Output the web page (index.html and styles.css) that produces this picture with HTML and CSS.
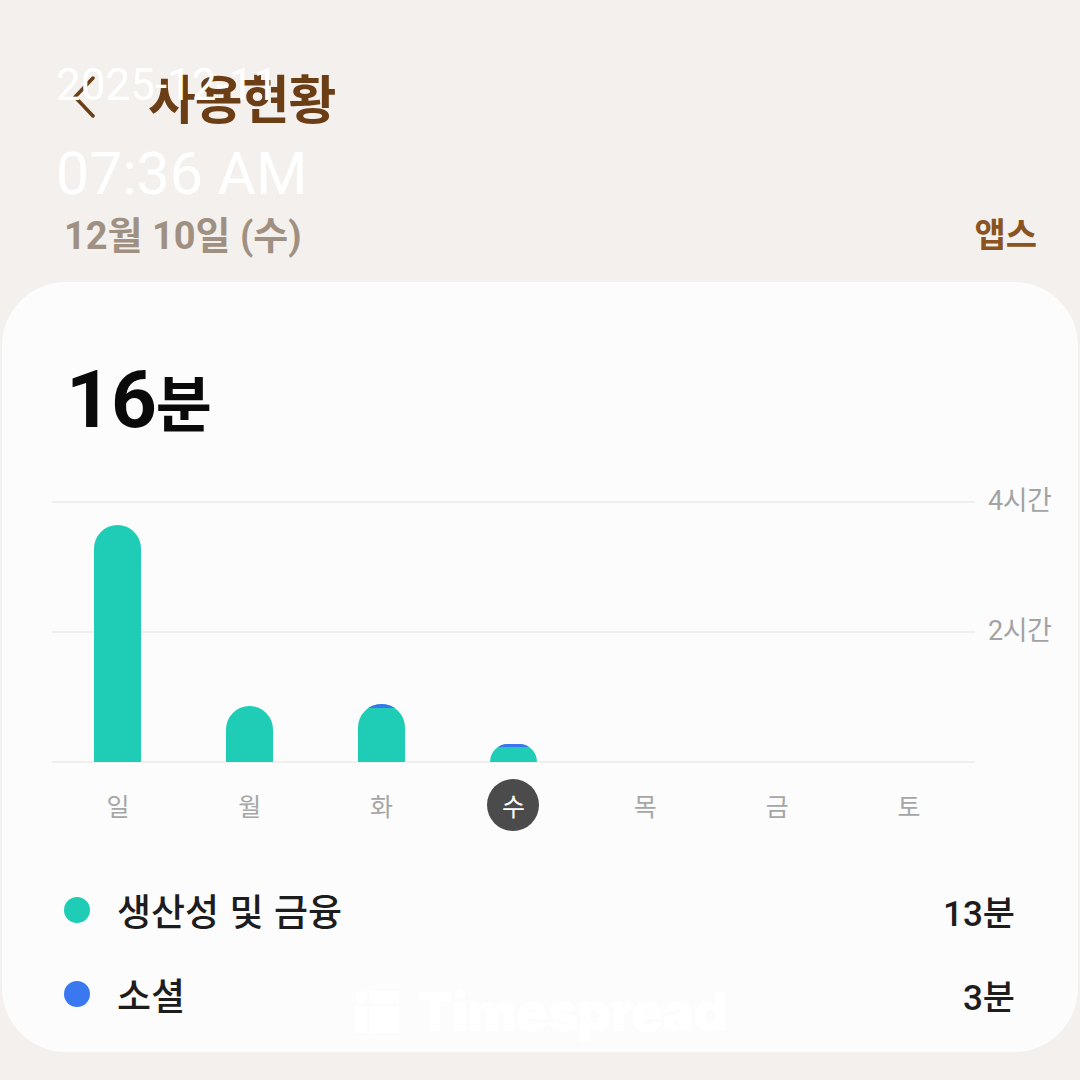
FILE: index.html
```html
<!DOCTYPE html>
<html lang="ko">
<head>
    <meta charset="UTF-8">
    <meta name="viewport" content="width=device-width, initial-scale=1.0">
    <title>사용현황</title>
    <link rel="stylesheet" href="styles.css">
</head>
<body>

<div class="stamp">
    <div class="stamp-date">2025-12-11</div>
    <div class="stamp-time">07:36 AM</div>
</div>

<header class="topbar">
    <svg class="back" width="24" height="42" viewBox="0 0 24 42">
        <path d="M21 2 L3 21 L21 40" fill="none" stroke="#6b3e16" stroke-width="3.5" stroke-linecap="round" stroke-linejoin="round"/>
    </svg>
    <h1>사용현황</h1>
</header>

<div class="subbar">
    <span class="date">12월 10일 (수)</span>
    <span class="apps">앱스</span>
</div>

<main class="card">
    <div class="total">16<span class="unit">분</span></div>

    <div class="chart">
        <div class="plot">
            <div class="bar-col"><div class="bar" style="height: 237px"></div></div>
            <div class="bar-col"><div class="bar" style="height: 56px"></div></div>
            <div class="bar-col"><div class="bar" style="height: 58px"><div class="seg-social" style="height: 4px"></div></div></div>
            <div class="bar-col"><div class="bar" style="height: 18px"><div class="seg-social" style="height: 3px"></div></div></div>
            <div class="bar-col"></div>
            <div class="bar-col"></div>
            <div class="bar-col"></div>
        </div>
        <div class="axis">
            <span>4시간</span>
            <span>2시간</span>
        </div>
    </div>

    <div class="days">
        <span>일</span>
        <span>월</span>
        <span>화</span>
        <span class="today">수</span>
        <span>목</span>
        <span>금</span>
        <span>토</span>
    </div>

    <ul class="legend">
        <li><i class="dot teal"></i><span class="name">생산성 및 금융</span><span class="value">13분</span></li>
        <li><i class="dot blue"></i><span class="name">소셜</span><span class="value">3분</span></li>
    </ul>

    <div class="watermark">
        <svg width="44" height="42" viewBox="0 0 44 42">
            <circle cx="6" cy="6" r="6" fill="#fff"/>
            <rect x="0" y="15" width="12" height="27" fill="#fff"/>
            <rect x="15" y="0" width="29" height="12" fill="#fff"/>
            <rect x="15" y="15" width="29" height="27" fill="#fff"/>
        </svg>
        <span>Timespread</span>
    </div>
</main>

</body>
</html>
```

FILE: styles.css
```css
body {
    margin: 0;
    width: 1080px;
    height: 1080px;
    overflow: hidden;
    background-color: #f3f0ed;
    font-family: Roboto, "Noto Sans CJK KR", sans-serif;
    position: relative;
}
.stamp {
    position: absolute;
    top: 58px;
    left: 56px;
    color: #fff;
    font-family: Roboto, sans-serif;
    font-weight: 400;
    z-index: 10;
}
.stamp-date {
    font-size: 44px;
    line-height: 54px;
}
.stamp-time {
    font-size: 59px;
    line-height: 68px;
    margin-top: 28px;
}
.topbar {
    display: flex;
    align-items: center;
    height: 62px;
    padding: 66px 0 0 72px;
}
.topbar h1 {
    margin: 0 0 0 52px;
    font-family: "Noto Sans CJK KR", sans-serif;
    font-size: 52px;
    line-height: 62px;
    font-weight: bold;
    color: #6b3e16;
    letter-spacing: -1px;
}
.subbar {
    display: flex;
    justify-content: space-between;
    align-items: center;
    height: 44px;
    margin-top: 82px;
    padding: 0 43px 0 64px;
    font-family: Roboto, "Noto Sans CJK KR", sans-serif;
    font-weight: bold;
}
.date {
    font-size: 38px;
    color: #a09082;
}
.apps {
    font-family: "Noto Sans CJK KR", sans-serif;
    font-size: 34px;
    color: #8a5422;
}
.card {
    position: relative;
    margin: 28px 2px 0 2px;
    height: 770px;
    background-color: #fcfcfc;
    border-radius: 64px;
}
.total {
    height: 80px;
    padding: 78px 0 0 64px;
    font-family: Roboto, "Noto Sans CJK KR", sans-serif;
    font-size: 80px;
    line-height: 80px;
    font-weight: bold;
    color: #0a0a0a;
    letter-spacing: -1px;
}
.total .unit {
    font-family: "Noto Sans CJK KR", sans-serif;
    font-size: 61px;
    line-height: 80px;
}
.chart {
    display: flex;
    margin-top: 61px;
    padding-left: 50px;
}
.plot {
    display: grid;
    grid-template-columns: repeat(7, 1fr);
    align-items: end;
    width: 923px;
    height: 262px;
    background: linear-gradient(to bottom, #f0efee 0, #f0efee 2px, transparent 2px) 0 0 / 100% 130px repeat-y;
}
.bar-col {
    display: flex;
    justify-content: center;
    height: 100%;
    align-items: flex-end;
    padding-bottom: 1px;
    box-sizing: border-box;
}
.bar {
    display: flex;
    flex-direction: column;
    width: 47px;
    background-color: #1fcdb6;
    border-radius: 24px 24px 0 0;
    overflow: hidden;
}
.seg-social {
    background-color: #3c74f0;
}
.axis {
    display: flex;
    flex-direction: column;
    margin-top: -17px;
    padding-left: 13px;
    font-family: Roboto, "Noto Sans CJK KR", sans-serif;
    font-size: 27px;
    color: #a3a3a3;
    letter-spacing: -0.5px;
}
.axis span {
    height: 130px;
    line-height: 34px;
}
.days {
    display: grid;
    grid-template-columns: repeat(7, 1fr);
    width: 923px;
    margin: 16px 0 0 50px;
    font-family: "Noto Sans CJK KR", sans-serif;
    font-size: 25px;
    color: #a6a6a6;
}
.days span {
    justify-self: center;
    width: 52px;
    height: 52px;
    line-height: 52px;
    text-align: center;
}
.days .today {
    background-color: #4b4b4b;
    color: #fff;
    border-radius: 50%;
}
.legend {
    list-style: none;
    margin: 49px 0 0 0;
    padding: 0 63px 0 62px;
    font-family: Roboto, "Noto Sans CJK KR", sans-serif;
    font-size: 35px;
    color: #1d1d1d;
}
.legend li {
    display: flex;
    align-items: center;
    height: 60px;
    margin-bottom: 24px;
}
.dot {
    width: 26px;
    height: 26px;
    border-radius: 50%;
    margin-right: 27px;
}
.dot.teal {
    background-color: #1fcdb6;
}
.dot.blue {
    background-color: #3a78f2;
}
.legend .name {
    flex: 1;
    font-family: "Noto Sans CJK KR", sans-serif;
    font-size: 37px;
    font-weight: 500;
}
.legend .value {
    font-weight: 500;
}
.watermark {
    position: absolute;
    left: 353px;
    top: 698px;
    display: flex;
    align-items: center;
    gap: 18px;
    color: #fff;
    font-family: Inter, Roboto, sans-serif;
    font-size: 53px;
    font-weight: 900;
    letter-spacing: -1px;
}
```
